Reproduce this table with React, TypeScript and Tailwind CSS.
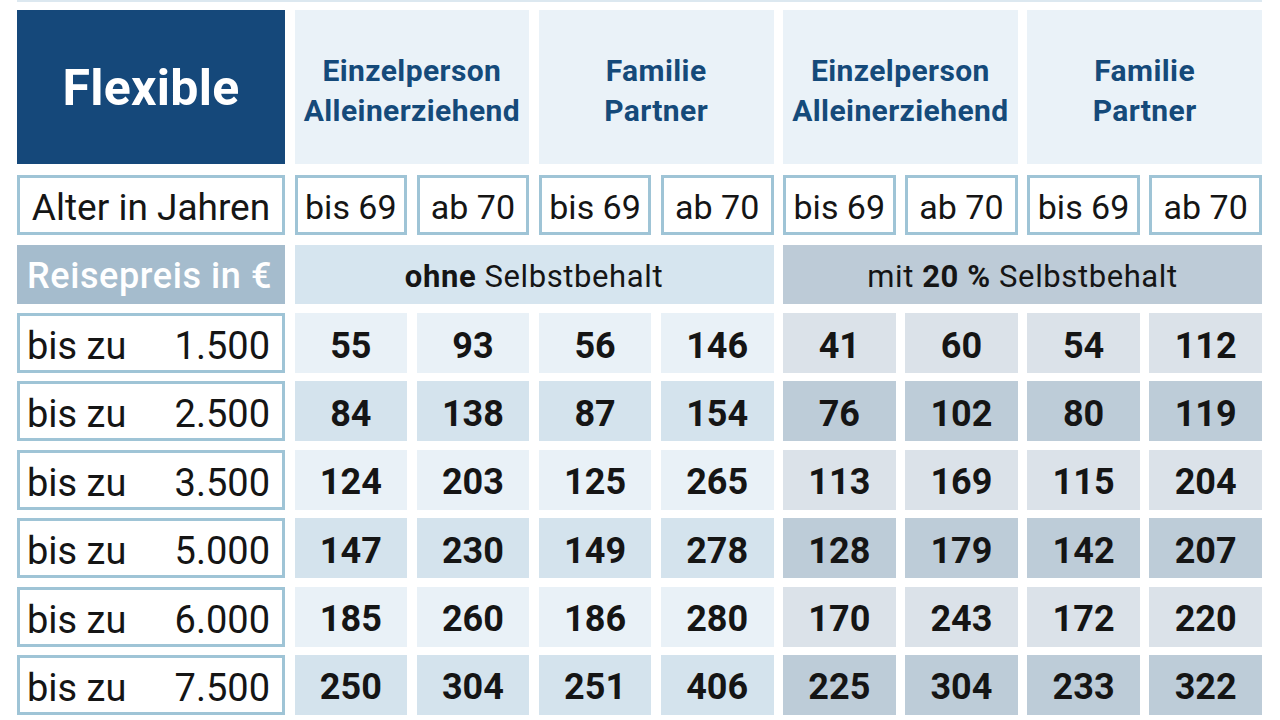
const font = { fontFamily: 'Roboto, "DejaVu Sans", sans-serif' }

const cols = 'grid grid-cols-[268px_repeat(8,minmax(0,1fr))] gap-x-[9.5px]'

const rows = [
  { limit: '1.500', values: [55, 93, 56, 146, 41, 60, 54, 112] },
  { limit: '2.500', values: [84, 138, 87, 154, 76, 102, 80, 119] },
  { limit: '3.500', values: [124, 203, 125, 265, 113, 169, 115, 204] },
  { limit: '5.000', values: [147, 230, 149, 278, 128, 179, 142, 207] },
  { limit: '6.000', values: [185, 260, 186, 280, 170, 243, 172, 220] },
  { limit: '7.500', values: [250, 304, 251, 406, 225, 304, 233, 322] },
]

const groups = [
  ['Einzelperson', 'Alleinerziehend'],
  ['Familie', 'Partner'],
  ['Einzelperson', 'Alleinerziehend'],
  ['Familie', 'Partner'],
]

function cellColor(row: number, col: number) {
  const odd = row % 2 === 0
  if (col < 4) return odd ? 'bg-[#e9f1f7]' : 'bg-[#d4e3ed]'
  return odd ? 'bg-[#dbe2e9]' : 'bg-[#bdccd8]'
}

export default function App() {
  return (
    <div className="w-[1280px] h-[720px] bg-white overflow-hidden text-[#151515]" style={font}>
      <div className="ml-[17px] w-[1245px] h-[2px] bg-[#dce8f0]" />

      <div className="ml-[17px] w-[1245px]">
        {/* Header */}
        <div className={`${cols} mt-[8px] h-[154px]`}>
          <div className="bg-[#15487a] flex items-center justify-center pt-[2px]">
            <span className="text-white font-bold text-[50px] leading-none tracking-[0.3px]">Flexible</span>
          </div>
          {groups.map((g, i) => (
            <div key={i} className="col-span-2 bg-[#eaf2f8] flex flex-col items-center justify-center pt-[8px] text-[#154a7a] font-bold text-[30px] leading-[40px] tracking-[0.4px]">
              <span>{g[0]}</span>
              <span>{g[1]}</span>
            </div>
          ))}
        </div>

        {/* Alter */}
        <div className={`${cols} mt-[11px] h-[60px]`}>
          <div className="border-[3px] border-[#9fc4d6] flex items-center justify-center pt-[4px] text-[37px] leading-none">
            Alter in Jahren
          </div>
          {[0, 1, 2, 3, 4, 5, 6, 7].map((i) => (
            <div key={i} className="border-[3px] border-[#9fc4d6] flex items-center justify-center pt-[4px] text-[34px] leading-none">
              {i % 2 === 0 ? 'bis 69' : 'ab 70'}
            </div>
          ))}
        </div>

        {/* Reisepreis */}
        <div className={`${cols} mt-[10px] h-[59px]`}>
          <div className="bg-[#a5bccd] flex items-center pl-[10px] pt-[3px] text-white font-medium text-[36px] leading-none tracking-[0.6px]">
            Reisepreis in €
          </div>
          <div className="col-span-4 bg-[#d6e5ef] flex items-center justify-center pt-[3px] text-[31px] leading-none tracking-[0.6px]">
            <span><b className="font-bold">ohne</b> Selbstbehalt</span>
          </div>
          <div className="col-span-4 bg-[#bdcbd7] flex items-center justify-center pt-[3px] text-[31px] leading-none tracking-[0.6px]">
            <span>mit <b className="font-bold">20 %</b> Selbstbehalt</span>
          </div>
        </div>

        {/* Data */}
        <div className="mt-[9px] flex flex-col gap-[8.4px]">
          {rows.map((r, ri) => (
            <div key={ri} className={`${cols} h-[60px]`}>
              <div className="border-[3px] border-[#9fc4d6] flex items-center justify-between pl-[7px] pr-[12px] pt-[6px] text-[38px] leading-none">
                <span>bis zu</span>
                <span>{r.limit}</span>
              </div>
              {r.values.map((v, ci) => (
                <div key={ci} className={`${cellColor(ri, ci)} flex items-center justify-center pt-[5px] font-bold text-[36px] leading-none`}>
                  {v}
                </div>
              ))}
            </div>
          ))}
        </div>
      </div>
    </div>
  )
}
